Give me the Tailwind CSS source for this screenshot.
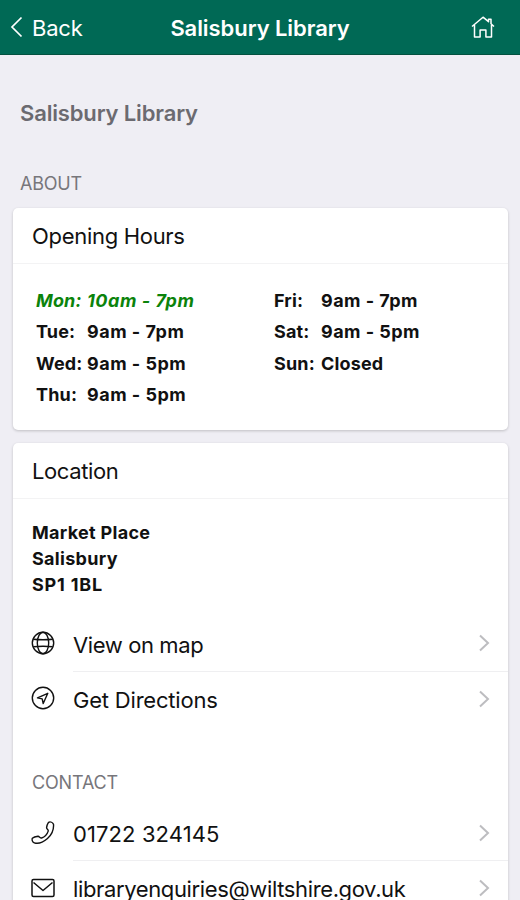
<!DOCTYPE html>
<html lang="en">
<head>
<meta charset="utf-8">
<title>Salisbury Library</title>
<script src="https://cdn.jsdelivr.net/npm/@tailwindcss/browser@4"></script>
</head>
<body class="h-[900px] overflow-hidden bg-[#efeef4] font-['Inter','Liberation_Sans',sans-serif] text-[#111]">
<header class="grid h-[55px] grid-cols-3 items-center border-b border-[#03513f] bg-[#006955] text-white">
  <a class="flex items-center gap-[9px] pl-[10px] text-[22px] leading-7 tracking-[-0.2px]">
    <svg class="h-[22px] w-[13px]" viewBox="0 0 13 22" fill="none" stroke="currentColor" stroke-width="1.7"><path d="M11.5 1.5 2 11l9.500 9.500"/></svg>
    <span class="pt-px">Back</span>
  </a>
  <h1 class="justify-self-center pt-[2px] text-[22px] font-semibold leading-7 tracking-[-0.070px] whitespace-nowrap">Salisbury Library</h1>
  <svg class="mr-[25px] h-6 w-6 justify-self-end" viewBox="0 0 24 24" fill="none" stroke="currentColor" stroke-width="1.5" stroke-linejoin="round"><path d="M1 11.500 12 2.200l5.500 4.500V4.200h2.500v4.600l3 2.700M3.500 10v12h5.600v-7h5.800v7h5.600V10"/></svg>
</header>
<main class="flex flex-col pr-[12px] pl-[13px]">
  <h2 class="mt-[44px] pl-[7px] text-[22px] font-semibold leading-7 tracking-[-0.150px] text-[#6b6a70]">Salisbury Library</h2>
  <h3 class="mt-[45px] pl-[7px] text-[18px] leading-6 tracking-[-0.2px] text-[#77767b]">ABOUT</h3>
  <section class="mt-[12px] h-[222px] rounded-[5px] bg-white shadow-[0_1px_3px_rgba(0,0,0,0.2)]">
    <h4 class="h-[56px] border-b border-[#f3f3f4] pt-[14px] pl-[19px] text-[22px] leading-7 tracking-[-0.3px]">Opening Hours</h4>
    <div class="grid grid-cols-[238px_1fr] pt-[21px] pl-[23px] text-[18px] font-bold leading-[31.400px] tracking-[0.150px]">
      <dl class="grid grid-cols-[51px_1fr] content-start">
        <dt class="italic text-[#0b830b]">Mon:</dt><dd class="italic tracking-[0.550px] text-[#0b830b]">10am - 7pm</dd>
        <dt>Tue:</dt><dd class="tracking-[0.500px]">9am - 7pm</dd>
        <dt>Wed:</dt><dd class="tracking-[0.500px]">9am - 5pm</dd>
        <dt>Thu:</dt><dd class="tracking-[0.500px]">9am - 5pm</dd>
      </dl>
      <dl class="grid grid-cols-[47px_1fr] content-start">
        <dt>Fri:</dt><dd class="tracking-[0.450px]">9am - 7pm</dd>
        <dt>Sat:</dt><dd class="tracking-[0.450px]">9am - 5pm</dd>
        <dt>Sun:</dt><dd>Closed</dd>
      </dl>
    </div>
  </section>
  <section class="mt-[13px] h-[480px] rounded-[5px] bg-white shadow-[0_1px_3px_rgba(0,0,0,0.2)]">
    <h4 class="h-[56px] border-b border-[#f3f3f4] pt-[14px] pl-[19px] text-[22px] leading-7 tracking-[-0.4px]">Location</h4>
    <address class="pt-[20.500px] pl-[19px] text-[18px] font-bold not-italic leading-[26.300px] tracking-[0.300px]">Market Place<br>Salisbury<br><span class="tracking-[0.800px]">SP1 1BL</span></address>
    <div class="mt-[18.500px] flex h-[55px] items-center pl-[18px]">
      <svg class="-mt-[2px] h-6 w-6" viewBox="0 0 24 24" fill="none" stroke="currentColor" stroke-width="1.400"><circle cx="12" cy="12" r="10.700"/><ellipse cx="12" cy="12" rx="5.700" ry="10.700"/><path d="M2.200 8.300q9.800 1 19.600 0M2.200 15.700q9.800-1 19.600 0"/></svg>
      <div class="ml-[18px] flex h-full flex-1 items-center justify-between border-b border-[#efeff1] pr-[18px]">
        <span class="pt-[2px] text-[22px] leading-7 tracking-[-0.4px]">View on map</span>
        <svg class="-mt-px h-[18px] w-3" viewBox="0 0 12 18" fill="none" stroke="#bdbdc0" stroke-width="2"><path d="m2 1.500 8 7.500-8 7.500"/></svg>
      </div>
    </div>
    <div class="flex h-[55px] items-center pl-[18px]">
      <svg class="-mt-[2px] h-6 w-6" viewBox="0 0 24 24" fill="none" stroke="currentColor" stroke-width="1.400" stroke-linejoin="round"><circle cx="12" cy="12" r="10.700"/><path d="m16.800 7.300-10.300 4.600 4.700 1 1 4.600z"/></svg>
      <div class="ml-[18px] flex h-full flex-1 items-center justify-between pr-[18px]">
        <span class="pt-px text-[22px] leading-7 tracking-[-0.2px]">Get Directions</span>
        <svg class="-mt-px h-[18px] w-3" viewBox="0 0 12 18" fill="none" stroke="#bdbdc0" stroke-width="2"><path d="m2 1.500 8 7.500-8 7.500"/></svg>
      </div>
    </div>
    <h3 class="mt-[44px] pl-[19px] text-[18px] leading-6 tracking-[-0.150px] text-[#77767b]">CONTACT</h3>
    <div class="mt-[11px] flex h-[55px] items-center pl-[18px]">
      <svg class="h-6 w-6" viewBox="0 0 24 24" fill="none" stroke="currentColor" stroke-width="1.400" stroke-linejoin="round"><path d="M17.500 1.300c2-.8 4.300.2 5 1.900.5 6-2.200 11-6 14.300-4 3.400-9.500 5.600-13.200 4.300C1.500 21.200.8 19 1.300 17.300c1.500-1.200 3.700-1.700 5.700-2 1.500.2 2.100 2 3.600 1.700 2.800-.9 5.700-4.200 6.600-6.900.4-1.500-1.700-2-1.600-3.500.1-2 .9-3.800 1.900-5.300z"/></svg>
      <div class="ml-[18px] flex h-full flex-1 items-center justify-between border-b border-[#efeff1] pr-[18px]">
        <span class="pt-[2px] text-[22px] leading-7 tracking-[0.100px]">01722 324145</span>
        <svg class="h-[18px] w-3" viewBox="0 0 12 18" fill="none" stroke="#bdbdc0" stroke-width="2"><path d="m2 1.500 8 7.500-8 7.500"/></svg>
      </div>
    </div>
    <div class="flex h-[55px] items-center pl-[18px]">
      <svg class="h-6 w-6" viewBox="0 0 24 24" fill="none" stroke="currentColor" stroke-width="1.500" stroke-linejoin="round"><rect x="1" y="3.500" width="22" height="17" rx="1.500"/><path d="m2.500 6.500 9.500 8 9.500-8"/></svg>
      <div class="ml-[18px] flex h-full flex-1 items-center justify-between pr-[18px]">
        <span class="pt-[2px] text-[22px] leading-7 tracking-[-0.370px]">libraryenquiries@wiltshire.gov.uk</span>
        <svg class="h-[18px] w-3" viewBox="0 0 12 18" fill="none" stroke="#bdbdc0" stroke-width="2"><path d="m2 1.500 8 7.500-8 7.500"/></svg>
      </div>
    </div>
  </section>
</main>
</body>
</html>
